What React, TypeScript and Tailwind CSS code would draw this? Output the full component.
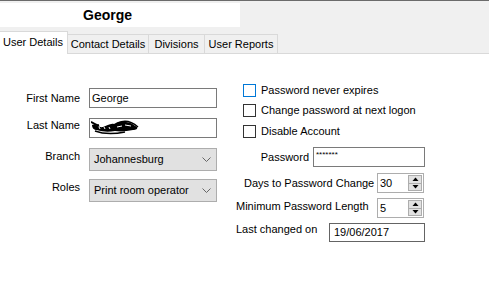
import React from "react";

function Checkbox({ label, focused }: { label: string; focused?: boolean }) {
  return (
    <div className="flex items-center h-[13px] ml-[7px]">
      <div
        className={`w-[13px] h-[13px] bg-white border ${
          focused ? "border-[#0078d7]" : "border-[#333333]"
        }`}
      />
      <span className="ml-[5px] leading-[13px]">{label}</span>
    </div>
  );
}

function Spinner({ value }: { value: string }) {
  return (
    <div className="w-[47px] h-[20px] border border-[#adadad] bg-white flex items-center">
      <span className="pl-[2px] flex-1 leading-[13px] pt-[1px]">{value}</span>
      <div className="w-[14px] h-[16px] mr-[1px] border border-[#adadad] bg-[#e1e1e1] flex flex-col">
        <div className="flex-1 flex items-center justify-center border-b border-[#adadad]">
          <svg width="7" height="4" viewBox="0 0 7 4">
            <path d="M0.5 4 L3.5 0.5 L6.5 4 Z" fill="#000" />
          </svg>
        </div>
        <div className="flex-1 flex items-center justify-center">
          <svg width="7" height="4" viewBox="0 0 7 4">
            <path d="M0.5 0 L3.5 3.5 L6.5 0 Z" fill="#000" />
          </svg>
        </div>
      </div>
    </div>
  );
}

function Select({ value }: { value: string }) {
  return (
    <div className="w-[128px] h-[23px] bg-[#e1e1e1] border border-[#adadad] flex items-center pl-[4px] pr-[5px]">
      <span className="flex-1 leading-[13px]">{value}</span>
      <svg width="9" height="6" viewBox="0 0 9 6">
        <path d="M0.5 0.5 L4.5 4.5 L8.5 0.5" fill="none" stroke="#666" strokeWidth="1" />
      </svg>
    </div>
  );
}

// redaction scribble over the surname
function Scribble() {
  return (
    <svg width="48" height="16" viewBox="0 0 48 16" className="ml-[1px]">
      <path
        d="M1 5 C5 4 8 8 12 7 C16 6 19 3 23 4 C27 1 31 1 35 2 C39 2 43 5 46 7 C47 9 45 10 42 10 C36 11 30 12 24 11 C18 12 12 12 6 10 C3 10 1 8 1 5 Z"
        fill="#000"
      />
      <path d="M0 2 C3 3 5 6 8 5" stroke="#000" strokeWidth="2" fill="none" />
      <path d="M27 3 C33 0 40 1 47 7" stroke="#000" strokeWidth="1.5" fill="none" />
      <path d="M4 11 C12 14 24 14 34 12" stroke="#000" strokeWidth="1.5" fill="none" />
      <path d="M8 7 L9 9 M13 7 L14 9 M18 7 L19 9" stroke="#fff" strokeWidth="1" />
      <path d="M26 7 L31 6 M34 5 L40 6" stroke="#fff" strokeWidth="1" />
    </svg>
  );
}

export default function App() {
  const tabs = [
    { name: "Contact Details", w: "w-[81px]" },
    { name: "Divisions", w: "w-[56px]" },
    { name: "User Reports", w: "w-[73px]" },
  ];

  return (
    <div className="w-[489px] h-[285px] overflow-hidden bg-white text-black text-[11px] font-['Liberation_Sans',Arial,sans-serif]">
      {/* Header */}
      <div className="border-t border-[#6b6b6b] bg-[#f0f0f0] pt-[2px]">
        <div className="w-[240px] h-[24px] bg-white flex items-center pl-[83px] font-bold text-[14px]">
          George
        </div>
        <div className="mt-[5px] h-[22px] flex items-end border-b border-[#d9d9d9]">
          <div className="relative -mb-px w-[68px] h-[23px] bg-white border-t border-r border-[#d9d9d9] pl-[3px] pt-[4px] leading-[13px]">
            User Details
          </div>
          {tabs.map((t) => (
            <div
              key={t.name}
              className={`${t.w} h-[19px] border-t border-r border-[#d9d9d9] bg-[#f0f0f0] flex items-center justify-center leading-[13px]`}
            >
              {t.name}
            </div>
          ))}
        </div>
      </div>

      {/* Body */}
      <div className="flex">
        {/* Left column */}
        <div className="w-[236px] pt-[34px] flex flex-col">
          <div className="flex items-center h-[20px]">
            <span className="w-[80px] text-right leading-[13px]">First Name</span>
            <div className="ml-[9px] w-[128px] h-[20px] border border-[#7a7a7a] bg-white flex items-center pl-[2px] leading-[13px]">
              George
            </div>
          </div>
          <div className="flex items-start h-[20px] mt-[10px]">
            <span className="w-[80px] text-right leading-[13px] pt-[1px]">Last Name</span>
            <div className="ml-[9px] w-[128px] h-[20px] border border-[#7a7a7a] bg-white flex items-center">
              <Scribble />
            </div>
          </div>
          <div className="flex items-start h-[23px] mt-[10px]">
            <span className="w-[80px] text-right leading-[13px] pt-[2px]">Branch</span>
            <div className="ml-[9px]">
              <Select value="Johannesburg" />
            </div>
          </div>
          <div className="flex items-start h-[23px] mt-[8px]">
            <span className="w-[80px] text-right leading-[13px] pt-[2px]">Roles</span>
            <div className="ml-[9px]">
              <Select value="Print room operator" />
            </div>
          </div>
        </div>

        {/* Right column */}
        <div className="flex-1 pt-[30px] flex flex-col">
          <Checkbox label="Password never expires" focused />
          <div className="mt-[7px]">
            <Checkbox label="Change password at next logon" />
          </div>
          <div className="mt-[8px]">
            <Checkbox label="Disable Account" />
          </div>

          <div className="mt-[9px] flex items-center h-[20px]">
            <span className="w-[73px] text-right leading-[13px] pt-[1px]">Password</span>
            <div className="ml-[4px] w-[112px] h-[20px] border border-[#7a7a7a] bg-white flex items-start pt-[3px] pl-[2px] text-[8px] leading-[8px]">
              *******
            </div>
          </div>

          <div className="mt-[6px] flex items-center h-[20px]">
            <span className="w-[141px] pl-[8px] leading-[13px]">Days to Password Change</span>
            <Spinner value="30" />
          </div>

          <div className="mt-[5px] flex items-start h-[20px]">
            <span className="w-[141px] leading-[13px] pt-[2px]">Minimum Password Length</span>
            <Spinner value="5" />
          </div>

          <div className="mt-[5px] flex items-start h-[19px]">
            <span className="w-[93px] leading-[13px]">Last changed on</span>
            <div className="w-[96px] h-[19px] border border-[#646464] bg-white flex items-center pl-[4px] leading-[13px]">
              19/06/2017
            </div>
          </div>
        </div>
      </div>
    </div>
  );
}
